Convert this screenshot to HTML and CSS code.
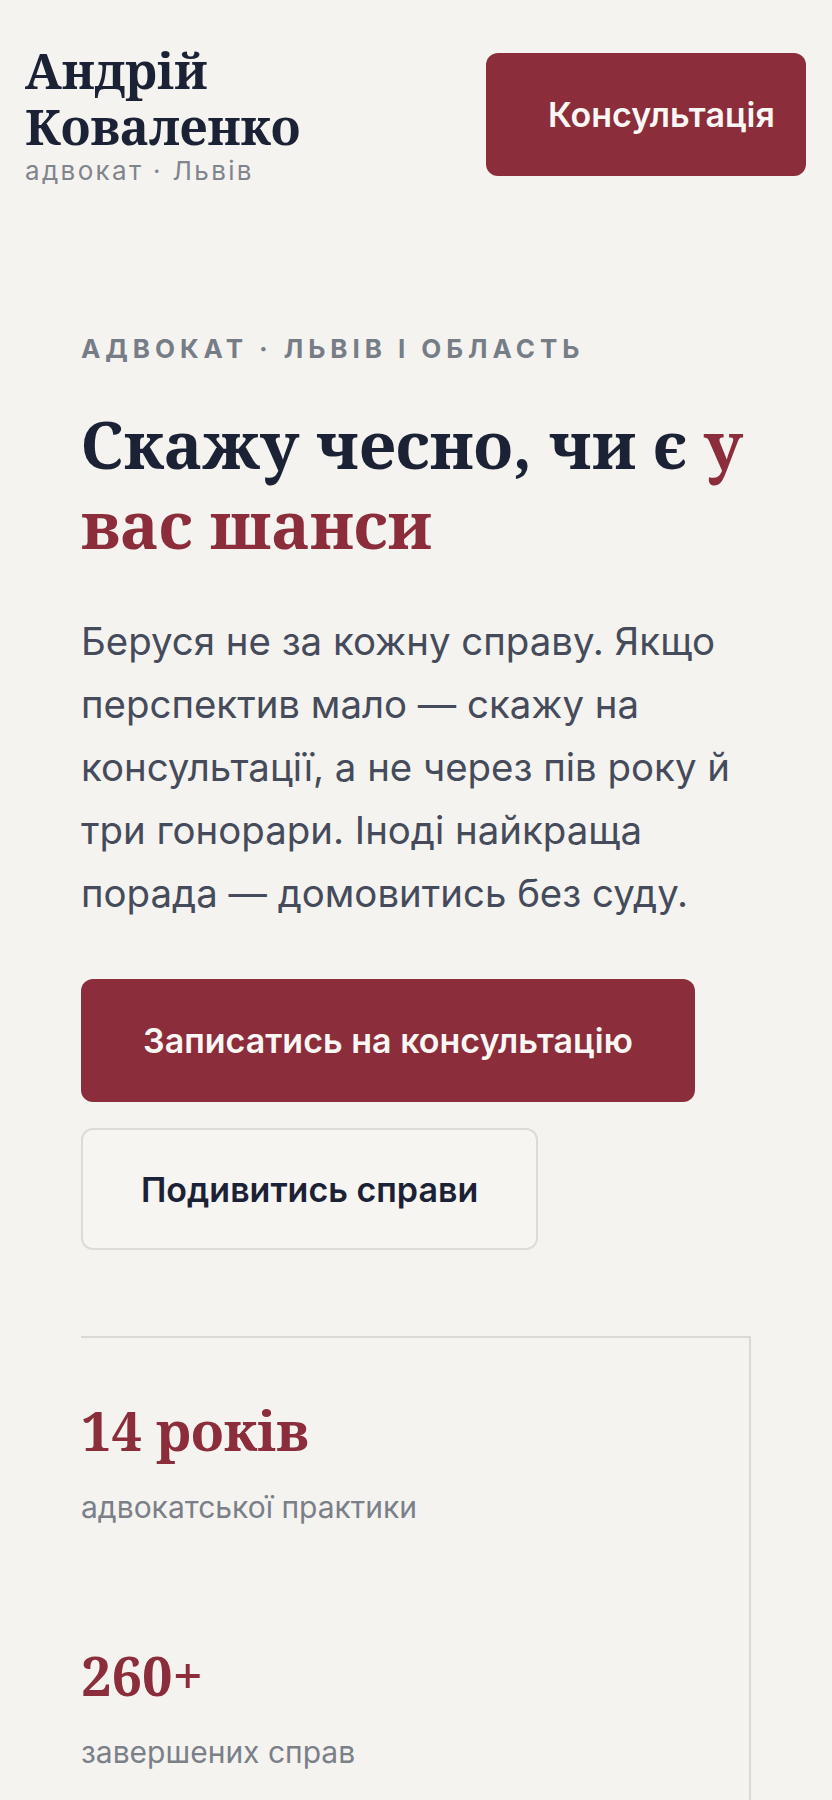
FILE: index.html
```html
<!DOCTYPE html>
<html lang="uk">
<head>
<meta charset="utf-8">
<title>Андрій Коваленко — адвокат, Львів</title>
<link rel="stylesheet" href="styles.css">
</head>
<body>
<header class="site-header">
  <div class="brand">
    <div class="brand-name"><span class="brand-line">Андрій</span><span class="brand-line">Коваленко</span></div>
    <div class="brand-sub">адвокат · Львів</div>
  </div>
  <a class="btn btn-primary btn-header" href="#">Консультація</a>
</header>
<main class="hero">
  <p class="eyebrow">АДВОКАТ · ЛЬВІВ І ОБЛАСТЬ</p>
  <h1 class="hero-title">Скажу чесно, чи є <span class="accent">у вас шанси</span></h1>
  <p class="hero-text">Беруся не за кожну справу. Якщо перспектив мало — скажу на консультації, а не через пів року й три гонорари. Іноді найкраща порада — домовитись без суду.</p>
  <div class="actions">
    <a class="btn btn-primary btn-lg" href="#">Записатись на консультацію</a>
    <a class="btn btn-outline btn-lg" href="#">Подивитись справи</a>
  </div>
  <section class="stats">
    <div class="stat">
      <div class="stat-num">14 років</div>
      <div class="stat-label">адвокатської практики</div>
    </div>
    <div class="stat">
      <div class="stat-num">260+</div>
      <div class="stat-label">завершених справ</div>
    </div>
  </section>
</main>
</body>
</html>
```

FILE: styles.css
```css
* { box-sizing: border-box; }
html, body { margin: 0; padding: 0; }
body {
  background: #f5f3f0;
  color: #1c2235;
  font-family: "Inter", "Noto Sans", sans-serif;
}
a { text-decoration: none; }

.site-header {
  display: flex;
  justify-content: space-between;
  align-items: center;
  padding: 42px 26px 42px 25px;
}
.brand-name {
  font-family: "Noto Serif", "PT Serif", "DejaVu Serif Condensed", "DejaVu Serif", serif;
  font-weight: 700;
  font-size: 49px;
  line-height: 56px;
  color: #1c2235;
}
.brand-line { display: block; }
.brand-sub {
  margin-top: 2px;
  font-size: 26px;
  line-height: 30px;
  color: #80848c;
  letter-spacing: 0.09em;
}

.btn {
  display: inline-flex;
  align-items: center;
  font-weight: 600;
  font-size: 34px;
  border-radius: 12px;
  white-space: nowrap;
}
.btn-primary {
  background: #8b2d3b;
  color: #fbf7f4;
}
.btn-header {
  width: 320px;
  height: 123px;
  padding: 0 20px 0 62px;
  overflow: hidden;
}
.btn-lg {
  height: 123px;
  padding: 0 62px;
  justify-content: center;
}
.btn-outline {
  background: #f7f5f2;
  border: 2px solid #dedbd6;
  color: #1c2235;
  height: 122px;
  padding: 0 58px;
}

.hero {
  padding: 106px 81px 0;
}
.eyebrow {
  margin: 0;
  font-size: 26px;
  line-height: 29px;
  font-weight: 700;
  letter-spacing: 0.19em;
  color: #777d87;
}
.hero-title {
  margin: 41px 0 0;
  font-family: "Noto Serif", "PT Serif", "DejaVu Serif Condensed", "DejaVu Serif", serif;
  font-weight: 700;
  font-size: 65px;
  line-height: 80px;
  color: #1c2235;
}
.accent { color: #8b2d3b; }
.hero-text {
  margin: 46px 0 0;
  font-size: 38.4px;
  line-height: 63px;
  color: #454b5a;
}
.actions {
  margin-top: 54px;
  display: flex;
  flex-direction: column;
  align-items: flex-start;
  gap: 26px;
}

.stats {
  margin-top: 86px;
  border-top: 2px solid #dcd9d4;
  border-right: 2px solid #dcd9d4;
}
.stat {
  padding: 61px 0 56px;
}
.stat-num {
  font-family: "Noto Serif", "PT Serif", "DejaVu Serif Condensed", "DejaVu Serif", serif;
  font-weight: 700;
  font-size: 54px;
  line-height: 62px;
  color: #8b2d3b;
}
.stat-label {
  margin-top: 26px;
  font-size: 30px;
  line-height: 40px;
  color: #7a7f88;
}
```
